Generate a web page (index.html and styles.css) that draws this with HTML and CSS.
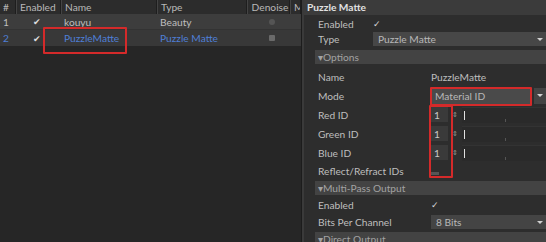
FILE: index.html
```html
<!DOCTYPE html>
<html lang="en">
<head>
  <meta charset="UTF-8" />
  <title>Render Elements</title>
  <link rel="stylesheet" href="styles.css">
</head>
<body>

  <div class="list-panel">
    <div class="list-row list-head">
      <div class="cell c-num">#</div>
      <div class="cell c-en">Enabled</div>
      <div class="cell c-name">Name</div>
      <div class="cell c-type">Type</div>
      <div class="cell c-den">Denoise</div>
      <div class="cell c-m">M</div>
    </div>
    <div class="list-row row-a">
      <div class="cell c-num">1</div>
      <div class="cell c-en"><span class="tick">✔</span></div>
      <div class="cell c-name">kouyu</div>
      <div class="cell c-type">Beauty</div>
      <div class="cell c-den"><span class="box round"></span></div>
      <div class="cell c-m"></div>
    </div>
    <div class="list-row row-b selected">
      <div class="cell c-num">2</div>
      <div class="cell c-en"><span class="tick">✔</span></div>
      <div class="cell c-name">PuzzleMatte</div>
      <div class="cell c-type">Puzzle Matte</div>
      <div class="cell c-den"><span class="box"></span></div>
      <div class="cell c-m"></div>
    </div>
    <div class="mark mark-name"></div>
  </div>

  <div class="splitter"></div>

  <div class="props-panel">
    <div class="props-title">Puzzle Matte</div>
    <div class="props-body">
      <div class="prop">
        <span class="label">Enabled</span>
        <span class="check">✓</span>
      </div>
      <div class="prop">
        <span class="label">Type</span>
        <div class="dropdown type-drop">Puzzle Matte<span class="arrow"></span></div>
      </div>

      <div class="section">▾Options</div>
      <div class="prop wide">
        <span class="label">Name</span>
        <span class="value">PuzzleMatte</span>
      </div>
      <div class="prop wide">
        <span class="label">Mode</span>
        <div class="dropdown split">
          <span class="drop-text">Material ID</span>
          <span class="drop-btn"><span class="arrow"></span></span>
        </div>
      </div>
      <div class="prop wide id-row">
        <span class="label">Red ID</span>
        <div class="spin"><span class="spin-box">1</span><span class="spin-arr">⇕</span><span class="slider"><i class="knob"></i><i class="tick-mark"></i></span></div>
      </div>
      <div class="prop wide id-row">
        <span class="label">Green ID</span>
        <div class="spin"><span class="spin-box">1</span><span class="spin-arr">⇕</span><span class="slider"><i class="knob"></i><i class="tick-mark"></i></span></div>
      </div>
      <div class="prop wide id-row">
        <span class="label">Blue ID</span>
        <div class="spin"><span class="spin-box">1</span><span class="spin-arr">⇕</span><span class="slider"><i class="knob"></i><i class="tick-mark"></i></span></div>
      </div>
      <div class="prop wide short">
        <span class="label">Reflect/Refract IDs</span>
        <span class="mini-check"></span>
      </div>

      <div class="section tight">▾Multi-Pass Output</div>
      <div class="prop wide mid">
        <span class="label">Enabled</span>
        <span class="check">✓</span>
      </div>
      <div class="prop wide mid">
        <span class="label">Bits Per Channel</span>
        <div class="dropdown">8 Bits<span class="arrow"></span></div>
      </div>
      <div class="section tight">▾Direct Output</div>
    </div>
    <div class="mark mark-mode"></div>
    <div class="mark mark-ids"></div>
  </div>

</body>
</html>
```

FILE: styles.css
```css
body {
  margin: 0;
  width: 546px;
  height: 242px;
  overflow: hidden;
  display: flex;
  background: #262626;
  color: #bebebe;
  font-family: 'Lato', 'Noto Sans', sans-serif;
  font-size: 10.2px;
}

/* left list */
.list-panel {
  position: relative;
  width: 301px;
  flex: none;
  background: #262626;
}

.list-row {
  display: grid;
  grid-template-columns: 16px 45px 96px 90px 43px 11px;
  height: 16px;
  align-items: stretch;
}

.list-head {
  height: 14px;
  background: #2c2c2c;
}

.list-head .cell {
  border-left: 1px solid #444;
  border-right: 1px solid #1e1e1e;
  padding-left: 3px;
  color: #b8b8b8;
}

.list-head .c-num {
  border-left: none;
}

.cell {
  display: flex;
  align-items: center;
  white-space: nowrap;
  overflow: hidden;
  padding-left: 3px;
}

.row-a {
  background: #3d3d3d;
  border-bottom: 1px solid #333;
  height: 15px;
}

.row-b {
  background: #383838;
}

.selected .c-num,
.selected .c-name,
.selected .c-type {
  color: #4f7fd6;
}

.c-en {
  padding-left: 17px;
}

.c-den {
  justify-content: center;
}

.tick {
  font-size: 9px;
  color: #dcdcdc;
}

.box {
  width: 6px;
  height: 6px;
  background: #6a6a6a;
  border-radius: 1px;
  margin-left: 4px;
}

.box.round {
  border-radius: 3px;
  background: #555;
}

.mark {
  position: absolute;
  border: 2px solid #d42a2a;
  border-radius: 1px;
  box-sizing: border-box;
}

.mark-name {
  left: 43px;
  top: 27px;
  width: 84px;
  height: 27px;
}

.splitter {
  width: 2px;
  flex: none;
  background: #3a3a3a;
  border-left: 1px solid #1c1c1c;
}

/* right property panel */
.props-panel {
  position: relative;
  flex: 1;
  background: #2d2d2d;
}

.props-title {
  height: 15px;
  line-height: 15px;
  padding-left: 3px;
  background: #3b3b3b;
  color: #e2e2e2;
  font-weight: bold;
}

.props-body {
  padding-left: 11px;
  padding-top: 1px;
}

.prop {
  display: flex;
  align-items: center;
  height: 15px;
}

.label {
  width: 55px;
  padding-left: 3px;
  flex: none;
  white-space: nowrap;
}

.prop.wide .label {
  width: 113px;
}

.prop.wide {
  height: 19px;
}

.prop.short {
  height: 17px;
}

.prop.mid {
  height: 17px;
}

.check {
  color: #d8d8d8;
  font-size: 9px;
}

.dropdown {
  flex: 1;
  display: flex;
  align-items: center;
  height: 14px;
  padding-left: 5px;
  background: #444;
  color: #b8b8b8;
  position: relative;
}

.type-drop {
  background: #474747;
}

.arrow {
  position: absolute;
  right: 3px;
  top: 6px;
  border-left: 3px solid transparent;
  border-right: 3px solid transparent;
  border-top: 3px solid #d0d0d0;
}

.section {
  height: 14px;
  line-height: 14px;
  margin: 4px 0 3px;
  padding-left: 3px;
  background: #434343;
  color: #a2a2a2;
}

.section.tight {
  margin: 2px 0 1px;
}

.value {
  color: #bdbdbd;
}

.dropdown.split {
  background: none;
  padding-left: 0;
  gap: 4px;
  height: 16px;
}

.drop-text {
  flex: 1;
  height: 16px;
  padding-left: 4px;
  display: flex;
  align-items: center;
  background: #4a4a4a;
}

.drop-btn {
  position: relative;
  width: 12px;
  height: 16px;
  background: #444;
}

.spin {
  flex: 1;
  display: flex;
  align-items: center;
  height: 15px;
}

.spin-box {
  width: 14px;
  height: 15px;
  padding-left: 3px;
  display: flex;
  align-items: center;
  background: #3a3a3a;
  color: #c8c8c8;
}

.spin-arr {
  width: 14px;
  text-align: center;
  font-size: 7px;
  color: #999;
}

.slider {
  flex: 1;
  position: relative;
  height: 15px;
  background: #2a2a2a;
  border-top: 1px solid #333;
}

.knob {
  position: absolute;
  left: 2px;
  top: 3px;
  width: 1px;
  height: 9px;
  background: #e0e0e0;
}

.tick-mark {
  position: absolute;
  left: 43px;
  bottom: 1px;
  width: 1px;
  height: 3px;
  background: #555;
}

.mini-check {
  width: 8px;
  height: 3px;
  margin-top: 5px;
  background: #555;
}

.mark-mode {
  left: 126px;
  top: 87px;
  width: 102px;
  height: 19px;
}

.mark-ids {
  left: 125px;
  top: 105px;
  width: 24px;
  height: 73px;
}
```
